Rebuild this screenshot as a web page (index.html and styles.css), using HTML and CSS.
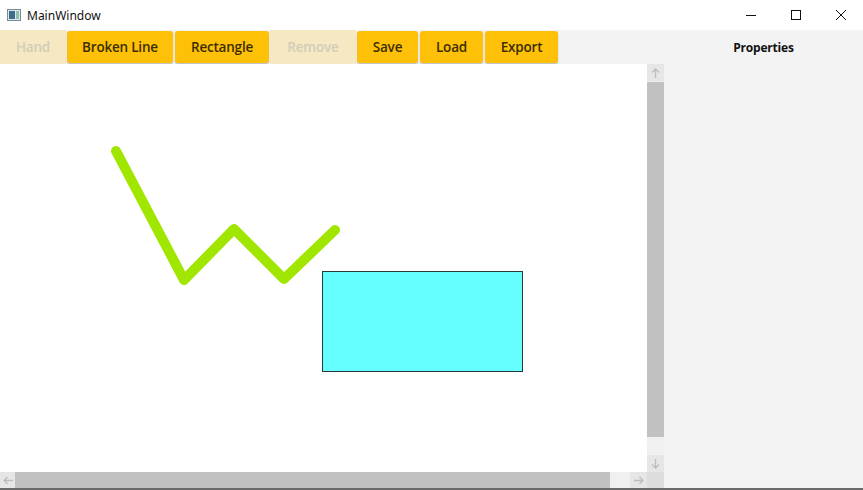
FILE: index.html
```html
<!DOCTYPE html>
<html>
<head>
<meta charset="utf-8">
<link rel="stylesheet" href="styles.css">
</head>
<body>
<div class="window">
  <div class="titlebar">
    <div class="appicon"><span class="ic-a"></span><span class="ic-b"></span></div>
    <div class="title">MainWindow</div>
    <div class="controls">
      <div class="ctl"><svg width="12" height="12" viewBox="0 0 12 12"><path d="M1 6.5H11" stroke="#111" stroke-width="1"/></svg></div>
      <div class="ctl"><svg width="12" height="12" viewBox="0 0 12 12"><rect x="1.5" y="1.5" width="9" height="9" fill="none" stroke="#111" stroke-width="1"/></svg></div>
      <div class="ctl"><svg width="12" height="12" viewBox="0 0 12 12"><path d="M1 1L11 11M11 1L1 11" stroke="#111" stroke-width="1"/></svg></div>
    </div>
  </div>
  <div class="main">
    <div class="left">
      <div class="toolbar">
        <button class="btn disabled w-hand">Hand</button>
        <button class="btn w-line">Broken Line</button>
        <button class="btn w-rect">Rectangle</button>
        <button class="btn disabled w-remove">Remove</button>
        <button class="btn w-save">Save</button>
        <button class="btn w-load">Load</button>
        <button class="btn w-export">Export</button>
      </div>
      <div class="scrollview">
        <div class="viewrow">
          <div class="canvas">
            <svg width="647" height="408" viewBox="0 0 647 408">
              <polyline points="116,87 184,216 234,165 284,215 335,166" fill="none" stroke="#a0e600" stroke-width="10" stroke-linecap="round" stroke-linejoin="round"/>
              <rect x="322.5" y="207.5" width="200" height="100" fill="#66ffff" stroke="#2a3a3a" stroke-width="1"/>
            </svg>
          </div>
          <div class="vscroll">
            <div class="arrow"><svg width="9" height="10" viewBox="0 0 9 10"><path d="M4.5 1V10M1 4.5L4.5 1L8 4.5" fill="none" stroke="#bcbcbc" stroke-width="1.3"/></svg></div>
            <div class="vthumb"></div>
            <div class="vtrack"></div>
            <div class="arrow"><svg width="9" height="10" viewBox="0 0 9 10"><path d="M4.5 0V9M1 5.5L4.5 9L8 5.5" fill="none" stroke="#bcbcbc" stroke-width="1.3"/></svg></div>
          </div>
        </div>
        <div class="hrow">
          <div class="hscroll">
            <div class="arrow"><svg width="10" height="9" viewBox="0 0 10 9"><path d="M1 4.5H10M4.5 1L1 4.5L4.5 8" fill="none" stroke="#bcbcbc" stroke-width="1.3"/></svg></div>
            <div class="hthumb"></div>
            <div class="htrack"></div>
            <div class="arrow"><svg width="10" height="9" viewBox="0 0 10 9"><path d="M0 4.5H9M5.5 1L9 4.5L5.5 8" fill="none" stroke="#bcbcbc" stroke-width="1.3"/></svg></div>
          </div>
          <div class="corner"></div>
        </div>
      </div>
    </div>
    <div class="panel">
      <div class="panel-title">Properties</div>
    </div>
  </div>
  <div class="bottomline"></div>
</div>
</body>
</html>
```

FILE: styles.css
```css
* { box-sizing: border-box; }
html, body { margin: 0; padding: 0; }
body { width: 863px; height: 490px; overflow: hidden; background: #fff; font-family: "Open Sans", "Noto Sans", sans-serif; }
.window { width: 863px; height: 490px; display: flex; flex-direction: column; }

.titlebar { height: 30px; display: flex; align-items: center; background: #fff; }
.appicon { width: 14px; height: 12px; margin-left: 7px; margin-right: 6px; border: 1px solid #7a8a94; background: #dfe6ea; display: flex; padding: 1px; gap: 1px; }
.ic-a { width: 6px; background: #3d6e8a; }
.ic-b { flex: 1; background: #8fc0a8; }
.title { font-family: "Noto Sans", "Open Sans", sans-serif; font-size: 12px; color: #111; }
.controls { margin-left: auto; display: flex; }
.ctl { width: 45px; height: 30px; display: flex; align-items: center; justify-content: center; }
.ctl svg { display: block; }

.main { flex: 1; display: flex; min-height: 0; }
.left { width: 664px; display: flex; flex-direction: column; }
.toolbar { height: 34px; background: #f3f3f3; display: flex; align-items: center; }
.btn { height: 32px; margin: 0 1px; border: none; border-radius: 3px; background: #ffc107; color: #3a2e00; font-family: "Open Sans", sans-serif; font-weight: 600; font-size: 13.5px; padding: 0; box-shadow: 0 1px 1.5px rgba(0,0,0,0.25); letter-spacing: -0.2px; }
.btn.disabled { background: #f5e8c2; color: #d2ccb9; box-shadow: none; border-radius: 0; height: 34px; margin: 0; }
.w-hand { width: 66px; }
.w-line { width: 106px; }
.w-rect { width: 94px; }
.w-remove { width: 86px; }
.w-save { width: 61px; }
.w-load { width: 63px; }
.w-export { width: 73px; }

.scrollview { flex: 1; display: flex; flex-direction: column; min-height: 0; }
.viewrow { display: flex; height: 408px; }
.canvas { width: 647px; height: 408px; background: #fff; overflow: hidden; }
.canvas svg { display: block; }
.vscroll { width: 17px; display: flex; flex-direction: column; background: #f0f0f0; }
.arrow { width: 17px; height: 17px; display: flex; align-items: center; justify-content: center; background: #e6e6e6; }
.vthumb { height: 355px; background: #c1c1c1; margin-top: 1px; }
.vtrack { flex: 1; background: #f0f0f0; }
.hrow { display: flex; height: 16px; }
.hscroll { width: 647px; display: flex; background: #f0f0f0; }
.hscroll .arrow { width: 15px; height: 16px; }
.hscroll .arrow:last-child { width: 17px; }
.hthumb { width: 595px; background: #c1c1c1; }
.htrack { flex: 1; background: #f0f0f0; }
.corner { width: 17px; background: #dcdcdc; }

.panel { flex: 1; background: #f3f3f3; }
.panel-title { height: 34px; display: flex; align-items: center; justify-content: center; font-family: "Open Sans", sans-serif; font-weight: 700; font-size: 12px; color: #111; letter-spacing: -0.2px; }
.bottomline { height: 2px; background: #6a6a6a; }
```
